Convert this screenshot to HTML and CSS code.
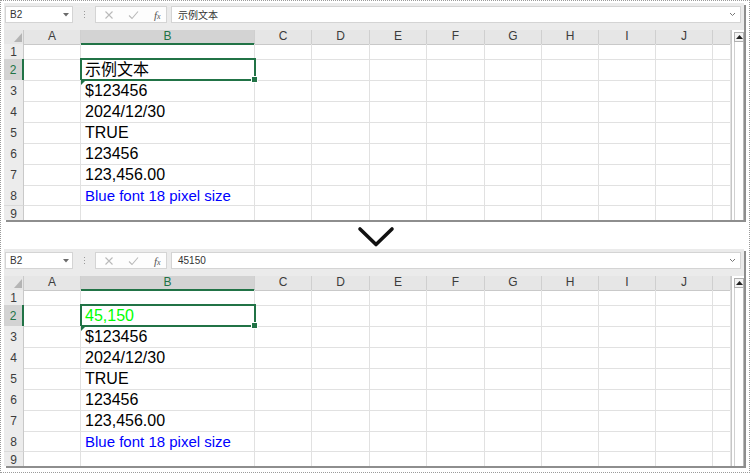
FILE: index.html
```html
<!DOCTYPE html>
<html>
<head>
<meta charset="utf-8">
<link rel="stylesheet" href="styles.css">
</head>
<body>
<div class="frame">

<div class="panel">
  <div class="toolbar">
    <div class="namebox"><span>B2</span><svg class="dd" width="6" height="4" viewBox="0 0 6 4"><polygon points="0,0 6,0 3,3.5" fill="#6b6b6b"/></svg></div>
    <div class="vdots"><i></i><i></i><i></i></div>
    <div class="btns">
      <svg width="10" height="10" viewBox="0 0 10 10"><path d="M1.5 1.5 L8.5 8.5 M8.5 1.5 L1.5 8.5" stroke="#b9b9b9" stroke-width="1.1" fill="none"/></svg>
      <svg width="11" height="10" viewBox="0 0 11 10"><path d="M1 5.5 L4 8.5 L10 1.5" stroke="#b9b9b9" stroke-width="1.1" fill="none"/></svg>
      <span class="fx">f<span class="fxx">x</span></span>
    </div>
    <div class="formula"><span>示例文本</span><svg class="fdd" width="7" height="5" viewBox="0 0 7 5"><path d="M1 1 L3.5 3.5 L6 1" stroke="#777" stroke-width="1" fill="none"/></svg></div>
  </div>
  <div class="sheet">
    <div class="grid">
      <div class="row hdr"><div class="corner"><svg width="20" height="14" viewBox="0 0 20 14"><polygon points="18,3 18,12 10,12" fill="#b4b4b4"/></svg></div><div class="ch">A</div><div class="ch sel">B</div><div class="ch">C</div><div class="ch">D</div><div class="ch">E</div><div class="ch">F</div><div class="ch">G</div><div class="ch">H</div><div class="ch">I</div><div class="ch">J</div><div class="ch"></div></div>
      <div class="row r15"><div class="rh">1</div><div class="c"></div><div class="c"></div><div class="c"></div><div class="c"></div><div class="c"></div><div class="c"></div><div class="c"></div><div class="c"></div><div class="c"></div><div class="c"></div><div class="c"></div></div>
      <div class="row"><div class="rh sel">2</div><div class="c"></div><div class="c val active">示例文本</div><div class="c"></div><div class="c"></div><div class="c"></div><div class="c"></div><div class="c"></div><div class="c"></div><div class="c"></div><div class="c"></div><div class="c"></div></div>
      <div class="row"><div class="rh">3</div><div class="c"></div><div class="c val flag">$123456</div><div class="c"></div><div class="c"></div><div class="c"></div><div class="c"></div><div class="c"></div><div class="c"></div><div class="c"></div><div class="c"></div><div class="c"></div></div>
      <div class="row"><div class="rh">4</div><div class="c"></div><div class="c val">2024/12/30</div><div class="c"></div><div class="c"></div><div class="c"></div><div class="c"></div><div class="c"></div><div class="c"></div><div class="c"></div><div class="c"></div><div class="c"></div></div>
      <div class="row"><div class="rh">5</div><div class="c"></div><div class="c val">TRUE</div><div class="c"></div><div class="c"></div><div class="c"></div><div class="c"></div><div class="c"></div><div class="c"></div><div class="c"></div><div class="c"></div><div class="c"></div></div>
      <div class="row"><div class="rh">6</div><div class="c"></div><div class="c val">123456</div><div class="c"></div><div class="c"></div><div class="c"></div><div class="c"></div><div class="c"></div><div class="c"></div><div class="c"></div><div class="c"></div><div class="c"></div></div>
      <div class="row"><div class="rh">7</div><div class="c"></div><div class="c val">123,456.00</div><div class="c"></div><div class="c"></div><div class="c"></div><div class="c"></div><div class="c"></div><div class="c"></div><div class="c"></div><div class="c"></div><div class="c"></div></div>
      <div class="row"><div class="rh">8</div><div class="c"></div><div class="c val blue">Blue font 18 pixel size</div><div class="c"></div><div class="c"></div><div class="c"></div><div class="c"></div><div class="c"></div><div class="c"></div><div class="c"></div><div class="c"></div><div class="c"></div></div>
      <div class="row r14"><div class="rh">9</div><div class="c"></div><div class="c"></div><div class="c"></div><div class="c"></div><div class="c"></div><div class="c"></div><div class="c"></div><div class="c"></div><div class="c"></div><div class="c"></div><div class="c"></div></div>
    </div>
    <div class="vscroll"><div class="up"><svg width="7" height="4" viewBox="0 0 7 4"><polygon points="0,4 7,4 3.5,0" fill="#222"/></svg></div><div class="track"></div></div>
  </div>
</div>

<div class="arrow"><svg width="38" height="22" viewBox="0 0 38 22"><polyline points="3,3 19,18.5 35,3" fill="none" stroke="#111" stroke-width="3.6" stroke-linecap="round" stroke-linejoin="round"/></svg></div>

<div class="panel">
  <div class="toolbar">
    <div class="namebox"><span>B2</span><svg class="dd" width="6" height="4" viewBox="0 0 6 4"><polygon points="0,0 6,0 3,3.5" fill="#6b6b6b"/></svg></div>
    <div class="vdots"><i></i><i></i><i></i></div>
    <div class="btns">
      <svg width="10" height="10" viewBox="0 0 10 10"><path d="M1.5 1.5 L8.5 8.5 M8.5 1.5 L1.5 8.5" stroke="#b9b9b9" stroke-width="1.1" fill="none"/></svg>
      <svg width="11" height="10" viewBox="0 0 11 10"><path d="M1 5.5 L4 8.5 L10 1.5" stroke="#b9b9b9" stroke-width="1.1" fill="none"/></svg>
      <span class="fx">f<span class="fxx">x</span></span>
    </div>
    <div class="formula"><span>45150</span><svg class="fdd" width="7" height="5" viewBox="0 0 7 5"><path d="M1 1 L3.5 3.5 L6 1" stroke="#777" stroke-width="1" fill="none"/></svg></div>
  </div>
  <div class="sheet">
    <div class="grid">
      <div class="row hdr"><div class="corner"><svg width="20" height="14" viewBox="0 0 20 14"><polygon points="18,3 18,12 10,12" fill="#b4b4b4"/></svg></div><div class="ch">A</div><div class="ch sel">B</div><div class="ch">C</div><div class="ch">D</div><div class="ch">E</div><div class="ch">F</div><div class="ch">G</div><div class="ch">H</div><div class="ch">I</div><div class="ch">J</div><div class="ch"></div></div>
      <div class="row r15"><div class="rh">1</div><div class="c"></div><div class="c"></div><div class="c"></div><div class="c"></div><div class="c"></div><div class="c"></div><div class="c"></div><div class="c"></div><div class="c"></div><div class="c"></div><div class="c"></div></div>
      <div class="row"><div class="rh sel">2</div><div class="c"></div><div class="c val active green">45,150</div><div class="c"></div><div class="c"></div><div class="c"></div><div class="c"></div><div class="c"></div><div class="c"></div><div class="c"></div><div class="c"></div><div class="c"></div></div>
      <div class="row"><div class="rh">3</div><div class="c"></div><div class="c val flag">$123456</div><div class="c"></div><div class="c"></div><div class="c"></div><div class="c"></div><div class="c"></div><div class="c"></div><div class="c"></div><div class="c"></div><div class="c"></div></div>
      <div class="row"><div class="rh">4</div><div class="c"></div><div class="c val">2024/12/30</div><div class="c"></div><div class="c"></div><div class="c"></div><div class="c"></div><div class="c"></div><div class="c"></div><div class="c"></div><div class="c"></div><div class="c"></div></div>
      <div class="row"><div class="rh">5</div><div class="c"></div><div class="c val">TRUE</div><div class="c"></div><div class="c"></div><div class="c"></div><div class="c"></div><div class="c"></div><div class="c"></div><div class="c"></div><div class="c"></div><div class="c"></div></div>
      <div class="row"><div class="rh">6</div><div class="c"></div><div class="c val">123456</div><div class="c"></div><div class="c"></div><div class="c"></div><div class="c"></div><div class="c"></div><div class="c"></div><div class="c"></div><div class="c"></div><div class="c"></div></div>
      <div class="row"><div class="rh">7</div><div class="c"></div><div class="c val">123,456.00</div><div class="c"></div><div class="c"></div><div class="c"></div><div class="c"></div><div class="c"></div><div class="c"></div><div class="c"></div><div class="c"></div><div class="c"></div></div>
      <div class="row"><div class="rh">8</div><div class="c"></div><div class="c val blue">Blue font 18 pixel size</div><div class="c"></div><div class="c"></div><div class="c"></div><div class="c"></div><div class="c"></div><div class="c"></div><div class="c"></div><div class="c"></div><div class="c"></div></div>
      <div class="row r14"><div class="rh">9</div><div class="c"></div><div class="c"></div><div class="c"></div><div class="c"></div><div class="c"></div><div class="c"></div><div class="c"></div><div class="c"></div><div class="c"></div><div class="c"></div><div class="c"></div></div>
    </div>
    <div class="vscroll"><div class="up"><svg width="7" height="4" viewBox="0 0 7 4"><polygon points="0,4 7,4 3.5,0" fill="#222"/></svg></div><div class="track"></div></div>
  </div>
</div>

</div>
</body>
</html>
```
FILE: styles.css
```css
* { box-sizing: border-box; }
html, body { margin: 0; padding: 0; background: #fff; }
body {
  width: 750px;
  height: 473px;
  overflow: hidden;
  font-family: "Liberation Sans", Arial, "Noto Sans CJK SC", sans-serif;
  color: #000;
}
.frame {
  width: 750px;
  height: 473px;
  border: 1px dotted #9a9a9a;
  padding: 2px 0 0 3px;
}
.panel {
  width: 740px;
  height: 217px;
  background: #fff;
  box-shadow: 2px 2px 0 #8e8e8e;
  display: flex;
  flex-direction: column;
}
.toolbar {
  height: 27px;
  flex: none;
  background: #ebebeb;
  display: flex;
  align-items: flex-start;
  padding: 3px 3px 0 1px;
}
.namebox {
  width: 68px;
  height: 17px;
  background: #fff;
  border: 1px solid #d4d4d4;
  display: flex;
  align-items: center;
  justify-content: space-between;
  padding: 0 3px 0 4px;
  font-size: 10px;
  color: #333;
}
.vdots {
  margin-left: 9px;
  width: 5px;
  height: 17px;
  display: flex;
  flex-direction: column;
  align-items: center;
  justify-content: center;
  gap: 2px;
}
.vdots i {
  display: block;
  width: 1px;
  height: 1px;
  background: #9a9a9a;
}
.btns {
  margin-left: 8px;
  width: 72px;
  height: 17px;
  background: #fdfdfd;
  border: 1px solid #d4d4d4;
  display: flex;
  align-items: center;
  padding: 0 0 0 8px;
  gap: 14px;
}
.fx {
  font-family: "Liberation Serif", "Times New Roman", serif;
  font-style: italic;
  font-size: 11px;
  color: #555;
  margin-left: 1px;
}
.fxx { font-size: 8px; }
.formula {
  margin-left: 4px;
  flex: 1;
  height: 17px;
  background: #fff;
  border: 1px solid #d4d4d4;
  display: flex;
  align-items: center;
  justify-content: space-between;
  padding: 0 4px 0 6px;
  font-size: 10px;
  color: #333;
}
.sheet {
  flex: 1;
  display: flex;
  overflow: hidden;
}
.grid {
  width: 727px;
  display: flex;
  flex-direction: column;
}
.row {
  display: grid;
  grid-template-columns: 20px 57px 174px 57px 58px 57px 58px 57px 57px 57px 57px 18px;
  height: 21px;
  flex: none;
}
.row.r15 { height: 15px; }
.row.r14 { height: 14px; }
.row.hdr { height: 14px; }
.corner {
  background: #e6e6e6;
  border-right: 1px solid #c9c9c9;
  border-bottom: 1px solid #c9c9c9;
}
.corner svg { display: block; }
.ch {
  background: #e6e6e6;
  border-right: 1px solid #cfcfcf;
  border-bottom: 1px solid #c9c9c9;
  font-size: 12px;
  line-height: 13px;
  text-align: center;
  color: #3c3c3c;
}
.ch.sel {
  background: #d3d3d3;
  color: #217346;
  border-bottom: 2px solid #217346;
}
.rh {
  background: #ececec;
  border-right: 1px solid #c9c9c9;
  border-bottom: 1px solid #dadada;
  font-size: 12px;
  text-align: center;
  color: #3c3c3c;
  display: flex;
  align-items: center;
  justify-content: center;
  padding-top: 1px;
}
.rh.sel {
  background: #d3d3d3;
  color: #217346;
  border-right: 2px solid #217346;
}
.c {
  border-right: 1px solid #e1e1e1;
  border-bottom: 1px solid #e1e1e1;
  position: relative;
}
.val {
  font-size: 16px;
  line-height: 20px;
  padding: 1px 0 0 4px;
  white-space: nowrap;
}
.blue {
  color: #0000ff;
  font-size: 15px;
  line-height: 18px;
  padding-top: 2px;
}
.green { color: #00ff00; }
.active::after {
  content: "";
  position: absolute;
  left: -1px;
  top: -1px;
  right: -2px;
  bottom: -1px;
  border: 2px solid #217346;
}
.active::before {
  content: "";
  position: absolute;
  right: -4px;
  bottom: -3px;
  width: 5px;
  height: 5px;
  background: #217346;
  border: 1px solid #fff;
  z-index: 2;
}
.flag::before {
  content: "";
  position: absolute;
  left: 0;
  top: 0;
  width: 0;
  height: 0;
  border-top: 5px solid #1e7145;
  border-right: 5px solid transparent;
}
.vscroll {
  width: 13px;
  border-left: 1px solid #c6c6c6;
  display: flex;
  flex-direction: column;
  padding: 2px 0 0 2px;
  background: #fff;
}
.up {
  width: 10px;
  height: 10px;
  border: 1px solid #b0b0b0;
  background: #f4f4f4;
  display: flex;
  align-items: center;
  justify-content: center;
}
.up svg { display: block; }
.track {
  flex: 1;
  width: 10px;
  border-left: 1px solid #d0d0d0;
  border-right: 1px solid #b8b8b8;
}
.arrow {
  height: 29px;
  display: flex;
  justify-content: center;
  padding: 6px 0 0 4px;
  width: 740px;
}
.arrow svg { display: block; }
```
